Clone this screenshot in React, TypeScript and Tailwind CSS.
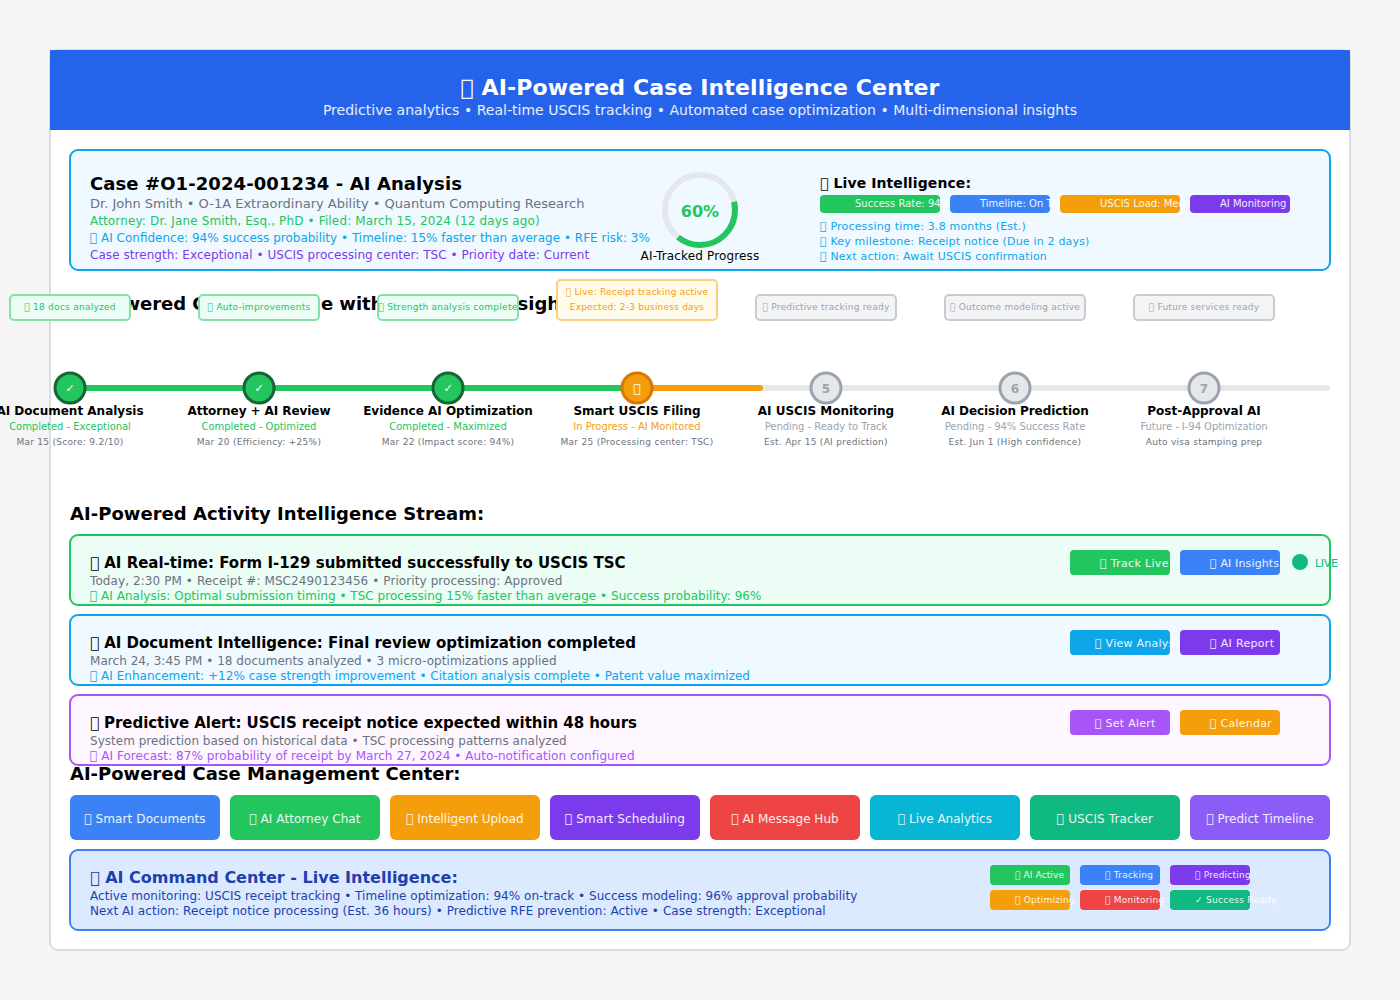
import React from "react";

const GLYPH = "\u{F0000}";

type Pill = { label: string; box: string };

const livePills: Pill[] = [
  { label: "Success Rate: 94%", box: "w-[120px] pl-[35px] bg-[#22c55e]" },
  { label: "Timeline: On Track", box: "w-[100px] pl-[30px] bg-[#3b82f6]" },
  { label: "USCIS Load: Medium", box: "w-[120px] pl-[40px] bg-[#f59e0b]" },
  { label: "AI Monitoring", box: "w-[100px] pl-[30px] bg-[#7c3aed]" },
];

type Tone = "done" | "active" | "pending";

type Step = {
  tone: Tone;
  mark: string;
  title: string;
  titleTracking?: string;
  status: string;
  date: string;
  tip: string[];
  tipWidth: string;
};

const steps: Step[] = [
  { tone: "done", mark: "✓", title: "AI Document Analysis", status: "Completed - Exceptional", date: "Mar 15 (Score: 9.2/10)", tip: [`${GLYPH} 18 docs analyzed`], tipWidth: "w-[122px]" },
  { tone: "done", mark: "✓", title: "Attorney + AI Review", titleTracking: "tracking-[-0.07px]", status: "Completed - Optimized", date: "Mar 20 (Efficiency: +25%)", tip: [`${GLYPH} Auto-improvements`], tipWidth: "w-[122px]" },
  { tone: "done", mark: "✓", title: "Evidence AI Optimization", status: "Completed - Maximized", date: "Mar 22 (Impact score: 94%)", tip: [`${GLYPH} Strength analysis complete`], tipWidth: "w-[142px]" },
  { tone: "active", mark: GLYPH, title: "Smart USCIS Filing", status: "In Progress - AI Monitored", date: "Mar 25 (Processing center: TSC)", tip: [`${GLYPH} Live: Receipt tracking active`, "Expected: 2-3 business days"], tipWidth: "w-[162px]" },
  { tone: "pending", mark: "5", title: "AI USCIS Monitoring", status: "Pending - Ready to Track", date: "Est. Apr 15 (AI prediction)", tip: [`${GLYPH} Predictive tracking ready`], tipWidth: "w-[142px]" },
  { tone: "pending", mark: "6", title: "AI Decision Prediction", titleTracking: "tracking-[-0.06px]", status: "Pending - 94% Success Rate", date: "Est. Jun 1 (High confidence)", tip: [`${GLYPH} Outcome modeling active`], tipWidth: "w-[142px]" },
  { tone: "pending", mark: "7", title: "Post-Approval AI", status: "Future - I-94 Optimization", date: "Auto visa stamping prep", tip: [`${GLYPH} Future services ready`], tipWidth: "w-[142px]" },
];

const toneTip: Record<Tone, string> = {
  done: "bg-[#ecfdf5] border-[#86e0aa] text-[#22c55e] tracking-[0.27px]",
  active: "bg-[#fffbeb] border-[#fbcd7d] text-[#f59e0b] tracking-[0.21px]",
  pending: "bg-[#f3f4f6] border-[#c8cbd2] text-[#9ca3af] tracking-[0.23px]",
};

const toneText: Record<Tone, string> = {
  done: "text-[#22c55e]",
  active: "text-[#f59e0b]",
  pending: "text-[#9ca3af]",
};

const toneMark: Record<Tone, string> = {
  done: "text-[11px] text-white",
  active: "text-[12px] text-white",
  pending: "text-[12px] text-[#9ca3af] font-bold",
};

const toneFill: Record<Tone, string> = { done: "#22c55e", active: "#f59e0b", pending: "#e5e7eb" };
const toneStroke: Record<Tone, string> = { done: "#166534", active: "#d97706", pending: "#9ca3af" };

type Activity = {
  box: string;
  title: string;
  titleStyle: string;
  meta: string;
  metaStyle: string;
  note: string;
  noteStyle: string;
  buttons: Pill[];
  live?: boolean;
};

const activities: Activity[] = [
  {
    box: "bg-[#ecfdf5] border-[#22c55e]",
    title: `${GLYPH} AI Real-time: Form I-129 submitted successfully to USCIS TSC`,
    titleStyle: "tracking-normal",
    meta: "Today, 2:30 PM • Receipt #: MSC2490123456 • Priority processing: Approved",
    metaStyle: "tracking-[0.09px]",
    note: `${GLYPH} AI Analysis: Optimal submission timing • TSC processing 15% faster than average • Success probability: 96%`,
    noteStyle: "text-[#22c55e] tracking-[0.025px]",
    buttons: [
      { label: `${GLYPH} Track Live`, box: "pl-[30px] bg-[#22c55e] tracking-[0.33px]" },
      { label: `${GLYPH} AI Insights`, box: "pl-[30px] bg-[#3b82f6] tracking-[0.14px]" },
    ],
    live: true,
  },
  {
    box: "bg-[#f0f9ff] border-[#0ea5e9]",
    title: `${GLYPH} AI Document Intelligence: Final review optimization completed`,
    titleStyle: "tracking-[-0.025px]",
    meta: "March 24, 3:45 PM • 18 documents analyzed • 3 micro-optimizations applied",
    metaStyle: "tracking-[0.04px]",
    note: `${GLYPH} AI Enhancement: +12% case strength improvement • Citation analysis complete • Patent value maximized`,
    noteStyle: "text-[#0ea5e9] tracking-[0.025px]",
    buttons: [
      { label: `${GLYPH} View Analysis`, box: "pl-[25px] bg-[#0ea5e9] tracking-[0.25px]" },
      { label: `${GLYPH} AI Report`, box: "pl-[30px] bg-[#7c3aed] tracking-[0.32px]" },
    ],
  },
  {
    box: "bg-[#fef7ff] border-[#a855f7]",
    title: `${GLYPH} Predictive Alert: USCIS receipt notice expected within 48 hours`,
    titleStyle: "tracking-[-0.06px]",
    meta: "System prediction based on historical data • TSC processing patterns analyzed",
    metaStyle: "tracking-[0.015px]",
    note: `${GLYPH} AI Forecast: 87% probability of receipt by March 27, 2024 • Auto-notification configured`,
    noteStyle: "text-[#a855f7] tracking-[0.06px]",
    buttons: [
      { label: `${GLYPH} Set Alert`, box: "pl-[25px] bg-[#a855f7] tracking-[0.25px]" },
      { label: `${GLYPH} Calendar`, box: "pl-[30px] bg-[#f59e0b] tracking-[0.25px]" },
    ],
  },
];

const actions: Pill[] = [
  { label: `${GLYPH} Smart Documents`, box: "w-[150px] bg-[#3b82f6] tracking-[0.1px]" },
  { label: `${GLYPH} AI Attorney Chat`, box: "w-[150px] bg-[#22c55e] tracking-[0.06px]" },
  { label: `${GLYPH} Intelligent Upload`, box: "w-[150px] bg-[#f59e0b]" },
  { label: `${GLYPH} Smart Scheduling`, box: "w-[150px] bg-[#7c3aed] tracking-[0.13px]" },
  { label: `${GLYPH} AI Message Hub`, box: "w-[150px] bg-[#ef4444]" },
  { label: `${GLYPH} Live Analytics`, box: "w-[150px] bg-[#06b6d4]" },
  { label: `${GLYPH} USCIS Tracker`, box: "w-[150px] bg-[#10b981] tracking-[0.15px]" },
  { label: `${GLYPH} Predict Timeline`, box: "w-[140px] bg-[#8b5cf6]" },
];

const commandPills: Pill[] = [
  { label: `${GLYPH} AI Active`, box: "bg-[#22c55e] tracking-[0.12px]" },
  { label: `${GLYPH} Tracking`, box: "bg-[#3b82f6] tracking-[0.25px]" },
  { label: `${GLYPH} Predicting`, box: "bg-[#7c3aed] tracking-[0.22px]" },
  { label: `${GLYPH} Optimizing`, box: "bg-[#f59e0b] tracking-[0.25px]" },
  { label: `${GLYPH} Monitoring`, box: "bg-[#ef4444] tracking-[0.25px]" },
  { label: "✓ Success Ready", box: "bg-[#10b981] tracking-[0.28px]" },
];

function ProgressRing() {
  return (
    <div className="flex w-[160px] flex-col items-center pt-[19px]">
      <div className="grid size-20">
        <svg viewBox="0 0 80 80" className="size-20 [grid-area:1/1]">
          <circle cx="40" cy="40" r="35" fill="none" stroke="#e5e7eb" strokeWidth="6" />
          <circle cx="40" cy="40" r="35" fill="none" stroke="#22c55e" strokeWidth="6" strokeDasharray="87.4 132.6" strokeDashoffset="8.8" />
        </svg>
        <span className="pt-8 text-center text-[16px] leading-[19px] font-bold text-[#22c55e] [grid-area:1/1]">60%</span>
      </div>
      <p className="-mt-px text-[12px] leading-[14px] tracking-[0.15px]">AI-Tracked Progress</p>
    </div>
  );
}

function CaseSummary() {
  return (
    <section className="mx-[18px] mt-[19px] flex h-[122px] rounded-[9px] border-2 border-[#0ea5e9] bg-[#f0f9ff] pl-[19px]">
      <div className="w-[530px] pt-[22px]">
        <h2 className="text-[18px] leading-[21px] font-bold tracking-[0.09px]">Case #O1-2024-001234 - AI Analysis</h2>
        <p className="mt-[2px] text-[13px] leading-[15px] text-[#6b7280]">Dr. John Smith • O-1A Extraordinary Ability • Quantum Computing Research</p>
        <p className="mt-[3px] text-[12px] leading-[14px] tracking-[0.145px] text-[#22c55e]">Attorney: Dr. Jane Smith, Esq., PhD • Filed: March 15, 2024 (12 days ago)</p>
        <p className="mt-[3px] text-[12px] leading-[14px] text-[#0ea5e9]">{GLYPH} AI Confidence: 94% success probability • Timeline: 15% faster than average • RFE risk: 3%</p>
        <p className="mt-[3px] text-[12px] leading-[14px] tracking-[0.05px] text-[#7c3aed]">Case strength: Exceptional • USCIS processing center: TSC • Priority date: Current</p>
      </div>
      <ProgressRing />
      <div className="ml-10 pt-[24px]">
        <h3 className="text-[14px] leading-4 font-bold tracking-[0.1px]">{GLYPH} Live Intelligence:</h3>
        <div className="mt-1 flex gap-[10px]">
          {livePills.map((p) => (
            <div key={p.label} className={`h-[18px] shrink-0 rounded-[4px] pt-[3px] text-[10px] leading-[11px] text-white/90 ${p.box}`}>
              {p.label}
            </div>
          ))}
        </div>
        <div className="mt-[7px] flex flex-col gap-[2px] text-[11px] leading-[13px] tracking-[0.18px] text-[#0ea5e9]">
          <p>{GLYPH} Processing time: 3.8 months (Est.)</p>
          <p>{GLYPH} Key milestone: Receipt notice (Due in 2 days)</p>
          <p>{GLYPH} Next action: Await USCIS confirmation</p>
        </div>
      </div>
    </section>
  );
}

function StepColumn({ step }: { step: Step }) {
  return (
    <div className="flex flex-col items-center">
      <div className="flex h-[42px] items-end">
        <div className={`flex flex-col gap-[5px] rounded-[5px] border-2 pt-[6px] pb-[7px] text-[9px] leading-[10px] ${step.tipWidth} ${toneTip[step.tone]} ${step.tip.length > 1 ? "h-[42px]" : "h-[27px]"}`}>
          {step.tip.map((line) => (
            <p key={line} className="flex justify-center">{line}</p>
          ))}
        </div>
      </div>
      <div className="mt-[50px] grid size-[34px] shrink-0">
        <svg viewBox="0 0 34 34" className="size-[34px] [grid-area:1/1]">
          <circle cx="17" cy="17" r="15" fill={toneFill[step.tone]} stroke={toneStroke[step.tone]} strokeWidth="3" />
        </svg>
        <span className={`pt-[11px] text-center leading-[14px] [grid-area:1/1] ${toneMark[step.tone]}`}>{step.mark}</span>
      </div>
      <h3 className={`-mt-px text-[12px] leading-[14px] font-bold ${step.titleTracking ?? "tracking-normal"}`}>{step.title}</h3>
      <p className={`mt-[3px] text-[10px] leading-[11px] tracking-[-0.04px] ${toneText[step.tone]}`}>{step.status}</p>
      <p className="mt-[5px] text-[9px] leading-[10px] tracking-[0.28px] text-[#6b7280]">{step.date}</p>
    </div>
  );
}

function Timeline() {
  return (
    <section className="mx-[19px] grid h-[232px] grid-cols-[1260px]">
      <h2 className="pt-[22px] text-[18px] leading-[21px] font-bold tracking-[-0.04px] [grid-area:1/1]">AI-Powered Case Timeline with Predictive Insights:</h2>
      <div className="mt-[114px] flex h-[6px] rounded-[3px] bg-[#e5e7eb] [grid-area:1/1]">
        <div className="w-[567px] rounded-l-[3px] bg-[#22c55e]" />
        <div className="w-[126px] rounded-r-[3px] bg-[#f59e0b]" />
      </div>
      <div className="-ml-[94px] grid grid-cols-[repeat(7,188px)] gap-x-px pt-2 [grid-area:1/1]">
        {steps.map((s) => (
          <StepColumn key={s.title} step={s} />
        ))}
      </div>
    </section>
  );
}

function ActivityCard({ item }: { item: Activity }) {
  return (
    <article className={`flex h-[72px] justify-between rounded-[9px] border-2 pl-[19px] ${item.box}`}>
      <div className="pt-[18px]">
        <h3 className={`text-[15px] leading-[18px] font-bold ${item.titleStyle}`}>{item.title}</h3>
        <p className={`mt-[2px] text-[12px] leading-[14px] text-[#6b7280] ${item.metaStyle}`}>{item.meta}</p>
        <p className={`mt-px text-[12px] leading-[14px] ${item.noteStyle}`}>{item.note}</p>
      </div>
      <div className="flex w-[259px] pt-[14px] text-[11px] leading-[13px]">
        {item.buttons.map((b) => (
          <div key={b.label} className={`mr-[10px] h-[25px] w-[100px] shrink-0 rounded-[4px] pt-[7px] text-white/90 ${b.box}`}>
            {b.label}
          </div>
        ))}
        {item.live && (
          <>
            <div className="mt-1 ml-[2px] size-4 shrink-0 rounded-full bg-[#10b981]" />
            <span className="pt-[7px] pl-[7px] tracking-[-0.3px] text-[#10b981]">LIVE</span>
          </>
        )}
      </div>
    </article>
  );
}

function CommandCenter() {
  return (
    <section className="mx-[18px] mt-[9px] flex h-[82px] rounded-[9px] border-2 border-[#3b82f6] bg-[#dbeafe] pl-[19px] text-[#1e40af]">
      <div className="w-[900px] pt-[17px]">
        <h2 className="text-[16px] leading-[19px] font-bold">{GLYPH} AI Command Center - Live Intelligence:</h2>
        <p className="mt-[2px] text-[12px] leading-[14px] tracking-[0.04px]">Active monitoring: USCIS receipt tracking • Timeline optimization: 94% on-track • Success modeling: 96% approval probability</p>
        <p className="mt-px text-[12px] leading-[14px] tracking-[0.06px]">Next AI action: Receipt notice processing (Est. 36 hours) • Predictive RFE prevention: Active • Case strength: Exceptional</p>
      </div>
      <div className="grid grid-cols-[repeat(3,80px)] content-start gap-x-[10px] gap-y-[5px] pt-[14px]">
        {commandPills.map((p) => (
          <div key={p.label} className={`h-5 rounded-[4px] pt-[5px] pl-[25px] text-[9px] leading-[10px] text-white/90 ${p.box}`}>
            {p.label}
          </div>
        ))}
      </div>
    </section>
  );
}

export default function App() {
  return (
    <div className="h-[1000px] w-[1400px] overflow-hidden bg-[#f5f5f5] p-[49px] font-['DejaVu_Sans',sans-serif] whitespace-nowrap text-black">
      <main className="h-[902px] w-[1302px] rounded-[9px] border-2 border-[#dddddd] bg-white">
        <header className="-mx-px -mt-px flex h-20 flex-col items-center bg-[#2563eb] pt-6 text-white">
          <h1 className="text-[22px] leading-[27px] font-bold tracking-[0.13px]">{GLYPH} AI-Powered Case Intelligence Center</h1>
          <p className="mt-px text-[14px] leading-4 tracking-[0.025px] text-white/90">Predictive analytics • Real-time USCIS tracking • Automated case optimization • Multi-dimensional insights</p>
        </header>
        <CaseSummary />
        <Timeline />
        <h2 className="mx-[19px] text-[18px] leading-[21px] font-bold tracking-[0.025px]">AI-Powered Activity Intelligence Stream:</h2>
        <div className="mx-[18px] mt-[10px] flex flex-col gap-2">
          {activities.map((a) => (
            <ActivityCard key={a.title} item={a} />
          ))}
        </div>
        <h2 className="relative mx-[19px] -mt-[3px] text-[18px] leading-[21px] font-bold tracking-[-0.02px]">AI-Powered Case Management Center:</h2>
        <div className="mx-[19px] mt-[11px] flex gap-[10px]">
          {actions.map((a) => (
            <div key={a.label} className={`h-[45px] rounded-[6px] pt-[17px] text-center text-[12px] leading-[14px] text-white/90 ${a.box}`}>
              {a.label}
            </div>
          ))}
        </div>
        <CommandCenter />
      </main>
    </div>
  );
}
